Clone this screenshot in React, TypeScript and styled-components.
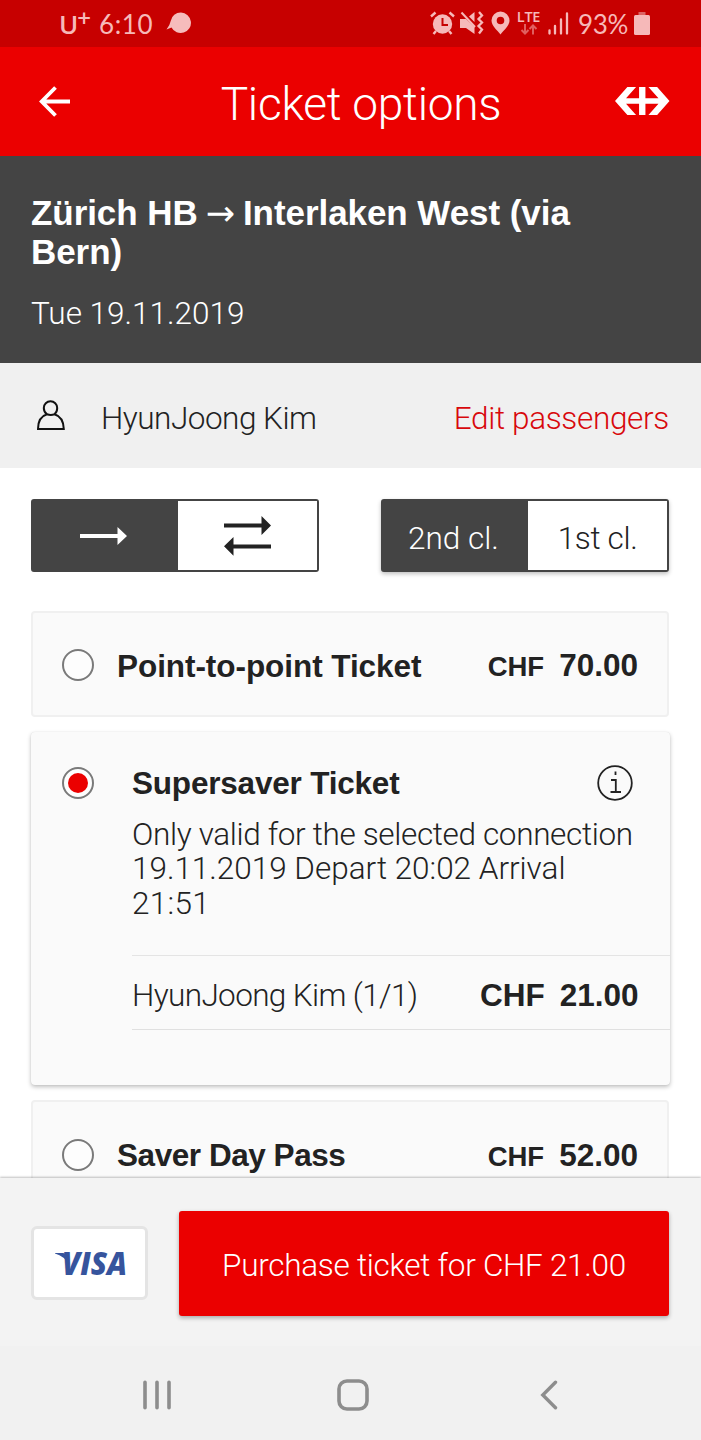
import React from 'react';
import styled, { createGlobalStyle, css } from 'styled-components';

const GlobalStyle = createGlobalStyle`
  * { box-sizing: border-box; }
  body { margin: 0; background: #fff; overflow: hidden; }
  svg { display: block; flex: none; }
`;

const light = css`
  font-family: Roboto, 'Liberation Sans', sans-serif;
  font-weight: 300;
`;
const bold = css`
  font-family: 'Liberation Sans', Arial, sans-serif;
  font-weight: 700;
`;

const Screen = styled.div`
  width: 701px;
  height: 1440px;
  display: flex;
  flex-direction: column;
  overflow: hidden;
  color: #222;
  font-size: 31.5px;
  ${light}
`;

const StatusBar = styled.div`
  flex: none;
  height: 46.6px;
  background: #c70000;
  color: #f6b9b9;
  display: flex;
  align-items: center;
  justify-content: space-between;
  padding: 0 51px 0 59px;
`;
const StatusGroup = styled.div`
  display: flex;
  align-items: center;
`;
const Carrier = styled.span`
  font: 600 26px/30px 'Open Sans', sans-serif;
  width: 31px;
  padding-top: 1px;
  letter-spacing: -1px;
  display: flex;
  sup { font-size: 24px; line-height: 17px; margin-left: 0; }
`;
const StatusText = styled.span<{ $width: number; $gap: number; $spacing: number }>`
  font: 400 26px/30px Lato, sans-serif;
  width: ${p => p.$width}px;
  margin-left: ${p => p.$gap}px;
  padding-top: 1px;
  letter-spacing: ${p => p.$spacing}px;
  white-space: nowrap;
`;
const StatusIcon = styled.svg<{ $gap: number }>`
  margin-left: ${p => p.$gap}px;
`;
const Network = styled.div`
  margin-left: 7px;
  width: 24px;
  height: 26px;
  display: flex;
  flex-direction: column;
  align-items: center;
  font: 600 14.5px/14px 'Open Sans', sans-serif;
  letter-spacing: -0.2px;
`;

const AppBar = styled.header`
  flex: none;
  height: 109px;
  background: #eb0000;
  color: #fff;
  display: flex;
  align-items: center;
  justify-content: space-between;
  padding: 0 31.5px 0 39px;
`;
const Title = styled.h1`
  margin: 0;
  padding: 6px 0 0 37px;
  font-size: 46px;
  line-height: 54px;
  letter-spacing: -0.25px;
  ${light}
`;

const Route = styled.section`
  flex: none;
  height: 207.4px;
  background: #444;
  color: #fff;
  padding: 37.5px 62px 0 31px;
`;
const RouteName = styled.h2`
  margin: 0;
  ${bold}
  font-size: 35px;
  line-height: 39px;
  letter-spacing: -0.06px;
`;
const RouteArrow = styled.span`
  font-family: 'DejaVu Sans', sans-serif;
  font-weight: 400;
  font-size: 35px;
  line-height: 1;
  margin: 0 -1.7px;
`;
const RouteDate = styled.p`
  margin: 22.5px 0 0;
  line-height: 39px;
`;

const Passengers = styled.section`
  flex: none;
  height: 105px;
  background: #f0f0f0;
  display: flex;
  align-items: center;
  padding: 0 32px 0 37px;
`;
const PassengerName = styled.span`
  flex: 1;
  padding: 6px 0 0 36px;
  letter-spacing: -0.5px;
`;
const EditLink = styled.a`
  padding-top: 6px;
  color: #d8080c;
  letter-spacing: -0.33px;
`;

const Content = styled.main`
  flex: 1;
  min-height: 0;
  overflow: hidden;
  padding: 31.5px 32px 0 31px;
`;
const Toggles = styled.div`
  display: flex;
  justify-content: space-between;
`;
const Toggle = styled.div<{ $raised?: boolean }>`
  display: flex;
  width: 288px;
  height: 72.5px;
  border: 2px solid #444;
  border-radius: 3px;
  background: #fff;
  ${p => p.$raised && css`box-shadow: 0 2px 4px rgba(0, 0, 0, 0.25);`}
`;
const ToggleOption = styled.div<{ $selected?: boolean }>`
  display: flex;
  align-items: center;
  justify-content: center;
  width: ${p => (p.$selected ? 145 : 139)}px;
  padding-right: ${p => (p.$selected ? 4 : 0)}px;
  background: ${p => (p.$selected ? '#444' : '#fff')};
  color: ${p => (p.$selected ? '#fff' : '#222')};
`;
const ToggleText = styled.span<{ $spacing: number }>`
  padding-top: 5px;
  letter-spacing: ${p => p.$spacing}px;
`;

const Card = styled.div`
  height: 106px;
  display: flex;
  align-items: center;
  background: #fafafa;
  border: 2px solid #f0f0f0;
  border-radius: 4px;
  padding: 3px 29px 0;
`;
const CardList = styled.div`
  margin-top: 39px;
  display: flex;
  flex-direction: column;
  gap: 15px;
`;
const OpenCard = styled.div`
  height: 353.5px;
  margin: 0 -0.5px;
  display: flex;
  background: #fafafa;
  border-radius: 4px;
  box-shadow: 0 2px 4px rgba(0, 0, 0, 0.25), 0 0 1px rgba(0, 0, 0, 0.12);
  padding: 33px 0 0 31.5px;
`;
const OpenBody = styled.div`
  flex: 1;
  margin-left: 38px;
`;
const OpenHead = styled.div`
  display: flex;
  align-items: center;
  justify-content: space-between;
  height: 36px;
  padding-right: 37px;
`;
const Radio = styled.span<{ $top?: number }>`
  flex: none;
  display: flex;
  align-items: center;
  justify-content: center;
  width: 32px;
  height: 32px;
  margin-top: ${p => p.$top ?? 0}px;
  border: 2px solid #7a7a7a;
  border-radius: 50%;
  background: #fdfdfd;
`;
const RadioDot = styled.span`
  width: 20px;
  height: 20px;
  border-radius: 50%;
  background: #eb0000;
`;
const TicketName = styled.span<{ $spacing?: number }>`
  ${bold}
  font-size: 31.5px;
  line-height: 36px;
  letter-spacing: ${p => p.$spacing ?? 0}px;
`;
const CardName = styled(TicketName)`
  flex: 1;
  padding: 1px 0 0 23px;
`;
const Price = styled.span<{ $small?: boolean }>`
  display: flex;
  align-items: baseline;
  gap: 15px;
  padding-top: ${p => (p.$small ? 2 : 4)}px;
  ${bold}
  font-size: 31.5px;
  line-height: 36px;
  span { font-size: ${p => (p.$small ? 27.5 : 31.5)}px; }
`;
const Description = styled.p`
  margin: 17px 0 34.5px;
  line-height: 34.3px;
  white-space: nowrap;
`;
const DescriptionLine = styled.span<{ $spacing: number }>`
  display: block;
  letter-spacing: ${p => p.$spacing}px;
`;
const FareRow = styled.div`
  height: 75px;
  border-top: 1px solid #e4e4e4;
  border-bottom: 1px solid #e0e0e0;
  display: flex;
  align-items: center;
  justify-content: space-between;
  padding-right: 31px;
`;
const FareName = styled.span`
  padding-top: 5px;
  letter-spacing: -0.63px;
`;

const Footer = styled.footer`
  flex: none;
  height: 168px;
  background: #f3f3f3;
  box-shadow: 0 -1px 2px rgba(0, 0, 0, 0.25);
  display: flex;
  justify-content: space-between;
  padding: 32.5px 32px 0 31px;
`;
const PaymentCard = styled.div`
  width: 117px;
  height: 74px;
  margin-top: 15.5px;
  display: flex;
  align-items: center;
  justify-content: center;
  background: #fff;
  border: 3px solid #e4e4e4;
  border-radius: 6px;
`;
const Purchase = styled.button`
  ${light}
  font-size: 31.5px;
  letter-spacing: -0.28px;
  width: 490px;
  height: 105px;
  padding: 5px 0 0;
  border: 0;
  border-radius: 3px;
  background: #eb0000;
  color: #fff;
  box-shadow: 0 2px 4px rgba(0, 0, 0, 0.3);
`;

const NavBar = styled.nav`
  flex: none;
  height: 94px;
  background: #f1f1f1;
  display: flex;
  align-items: center;
  justify-content: space-between;
  padding: 3px 143px 0 142px;
`;
const HomeIcon = styled.svg`
  margin-right: 7px;
`;

function AlarmIcon() {
  return (
    <StatusIcon $gap={0} width="25" height="24" viewBox="0 0 25 24" fill="none">
      <circle cx="12.5" cy="13" r="9.7" fill="#f6b9b9" />
      <path d="M1 5.5L5.5 1.5M24 5.5L19.5 1.5M6 20L3.5 23M19 20L21.5 23" stroke="#f6b9b9" strokeWidth="2.4" />
      <path d="M12.5 7V14H18" stroke="#c70000" strokeWidth="2" />
    </StatusIcon>
  );
}
function MuteIcon() {
  return (
    <StatusIcon $gap={5} width="24" height="24" viewBox="0 0 24 24" fill="none">
      <path d="M0 8H6L14.5 16V23L6 17H0Z M9 5.5L14.5 1V11Z" fill="#f6b9b9" />
      <path d="M1.5 1.5L15 16" stroke="#f6b9b9" strokeWidth="2" />
      <path d="M19 1L22 4.5L18.5 8L22 11.5L18.5 15L22 18.5L19 22.5" stroke="#f6b9b9" strokeWidth="2.3" />
    </StatusIcon>
  );
}

export default function App() {
  return (
    <Screen>
      <GlobalStyle />
      <StatusBar>
        <StatusGroup>
          <Carrier>U<sup>+</sup></Carrier>
          <StatusText $gap={9} $width={55} $spacing={0.6}>6:10</StatusText>
          <StatusIcon $gap={12} width="26" height="22" viewBox="0 0 26 22">
            <path d="M15 0.5A10.3 10.3 0 1 1 5.5 15.5L0.5 17.5Q4 13 4.7 9A10.3 10.3 0 0 1 15 0.5Z" fill="#f6bcbc" />
          </StatusIcon>
        </StatusGroup>
        <StatusGroup>
          <AlarmIcon />
          <MuteIcon />
          <StatusIcon $gap={7} width="19" height="24" viewBox="0 0 19 24">
            <path fillRule="evenodd" d="M9.5 0.5A9 9 0 0 1 18.5 9.5C18.5 14.5 13 19 9.5 23.5C6 19 0.5 14.5 0.5 9.5A9 9 0 0 1 9.5 0.5ZM9.5 5.7A3.8 3.8 0 1 0 9.5 13.3A3.8 3.8 0 1 0 9.5 5.7Z" fill="#f6b9b9" />
          </StatusIcon>
          <Network>
            LTE
            <svg width="18" height="11" viewBox="0 0 18 11" fill="none" stroke="#e06060" strokeWidth="2">
              <path d="M5 0V9M1.5 6L5 9.5L8.5 6M13 10.5V1.5M9.5 5L13 1.5L16.5 5" />
            </svg>
          </Network>
          <StatusIcon $gap={7} width="21" height="23" viewBox="0 0 21 23" stroke="#f6b9b9" strokeWidth="2.3" strokeLinecap="round">
            <path d="M1.5 18.5V21.5M7 14V21.5M13 7.5V21.5M19 1.5V21.5" />
          </StatusIcon>
          <StatusText $gap={9.5} $width={51} $spacing={-0.3}>93%</StatusText>
          <StatusIcon $gap={5} width="16" height="23" viewBox="0 0 16 23">
            <path d="M4.5 0H11.5V4H4.5Z" fill="#dc6464" />
            <path d="M1.5 3H14.5Q16 3 16 4.5V21.5Q16 23 14.5 23H1.5Q0 23 0 21.5V4.5Q0 3 1.5 3Z" fill="#f6b9b9" />
          </StatusIcon>
        </StatusGroup>
      </StatusBar>

      <AppBar>
        <svg width="31" height="31" viewBox="0 0 31 31" fill="none" stroke="#fff" strokeWidth="3.8">
          <path d="M31 15.5H3M16.5 1.5L2.7 15.5L16.5 29.5" />
        </svg>
        <Title>Ticket options</Title>
        <svg width="54.5" height="28" viewBox="0 0 163 83" fill="#fff">
          <path d="M0 41.5L37 0H63L33 33H72V0H91V33H130L100 0H126L163 41.5L126 83H100L130 50H91V83H72V50H33L63 83H37Z" />
        </svg>
      </AppBar>

      <Route>
        <RouteName>Zürich HB <RouteArrow>→</RouteArrow> Interlaken West (via Bern)</RouteName>
        <RouteDate>Tue 19.11.2019</RouteDate>
      </Route>

      <Passengers>
        <svg width="28" height="31" viewBox="0 0 28 31" fill="none" stroke="#111" strokeWidth="2">
          <path d="M10 14.3C7.5 12.5 6.8 9.7 6.8 8A6.7 6.7 0 0 1 20.2 8C20.2 10 19.5 12.5 17.5 14.3C23 16 26.5 20 26.8 29H1C1 20 4.5 16 10 14.3C12.5 15.3 15 15.3 17.5 14.3" />
        </svg>
        <PassengerName>HyunJoong Kim</PassengerName>
        <EditLink>Edit passengers</EditLink>
      </Passengers>

      <Content>
        <Toggles>
          <Toggle>
            <ToggleOption $selected>
              <svg width="48" height="18" viewBox="0 0 48 18" fill="#fff">
                <path d="M0 7H37.5V0L47 9L37.5 18V11H0Z" />
              </svg>
            </ToggleOption>
            <ToggleOption>
              <svg width="47" height="40" viewBox="0 0 47 40" fill="#222">
                <path d="M0 7.5H37.5V0L47 9.5L37.5 19V11.5H0Z M47 28.5H9.5V21L0 30.3L9.5 39.7V32.5H47Z" />
              </svg>
            </ToggleOption>
          </Toggle>
          <Toggle $raised>
            <ToggleOption $selected><ToggleText $spacing={0}>2nd cl.</ToggleText></ToggleOption>
            <ToggleOption><ToggleText $spacing={-0.35}>1st cl.</ToggleText></ToggleOption>
          </Toggle>
        </Toggles>

        <CardList>
          <Card>
            <Radio />
            <CardName $spacing={-0.06}>Point-to-point Ticket</CardName>
            <Price $small><span>CHF</span>70.00</Price>
          </Card>
          <OpenCard>
            <Radio $top={2}><RadioDot /></Radio>
            <OpenBody>
              <OpenHead>
                <TicketName $spacing={-0.2}>Supersaver Ticket</TicketName>
                <svg width="36" height="36" viewBox="0 0 36 36" fill="none" stroke="#222" strokeWidth="1.8">
                  <circle cx="18" cy="18" r="16.8" />
                  <path d="M18.5 6.5V10M14 15H18.8V27M13.5 27H24" />
                </svg>
              </OpenHead>
              <Description>
                <DescriptionLine $spacing={-0.35}>Only valid for the selected connection</DescriptionLine>
                <DescriptionLine $spacing={-0.02}>19.11.2019 Depart 20:02 Arrival</DescriptionLine>
                <DescriptionLine $spacing={0.3}>21:51</DescriptionLine>
              </Description>
              <FareRow>
                <FareName>HyunJoong Kim (1/1)</FareName>
                <Price><span>CHF</span>21.00</Price>
              </FareRow>
            </OpenBody>
          </OpenCard>
          <Card>
            <Radio />
            <CardName $spacing={-0.45}>Saver Day Pass</CardName>
            <Price $small><span>CHF</span>52.00</Price>
          </Card>
        </CardList>
      </Content>

      <Footer>
        <PaymentCard>
          <svg width="90" height="50" viewBox="0 0 90 50" fill="#36549d">
            <text x="17" y="37" textLength="65" lengthAdjust="spacingAndGlyphs" fontFamily="'Open Sans', sans-serif" fontWeight="800" fontStyle="italic" fontSize="31">VISA</text>
            <path d="M10 15H17.5Q21.500 15 22.500 18.500L24 27Q19.500 18 10 15.500Z" />
          </svg>
        </PaymentCard>
        <Purchase>Purchase ticket for CHF 21.00</Purchase>
      </Footer>

      <NavBar>
        <svg width="30" height="30" viewBox="0 0 30 30" stroke="#8d8d8d" strokeWidth="3.6" strokeLinecap="round">
          <path d="M3 2.3V27.7M15 2.3V27.7M27 2.3V27.7" />
        </svg>
        <HomeIcon width="32" height="32" viewBox="0 0 32 32" fill="none" stroke="#8d8d8d" strokeWidth="3.6">
          <rect x="2" y="2" width="28" height="28" rx="8" />
        </HomeIcon>
        <svg width="18" height="30" viewBox="0 0 18 30" fill="none" stroke="#8d8d8d" strokeWidth="3.4" strokeLinecap="round">
          <path d="M15.5 2.2L2.8 15L15.5 27.8" />
        </svg>
      </NavBar>
    </Screen>
  );
}
